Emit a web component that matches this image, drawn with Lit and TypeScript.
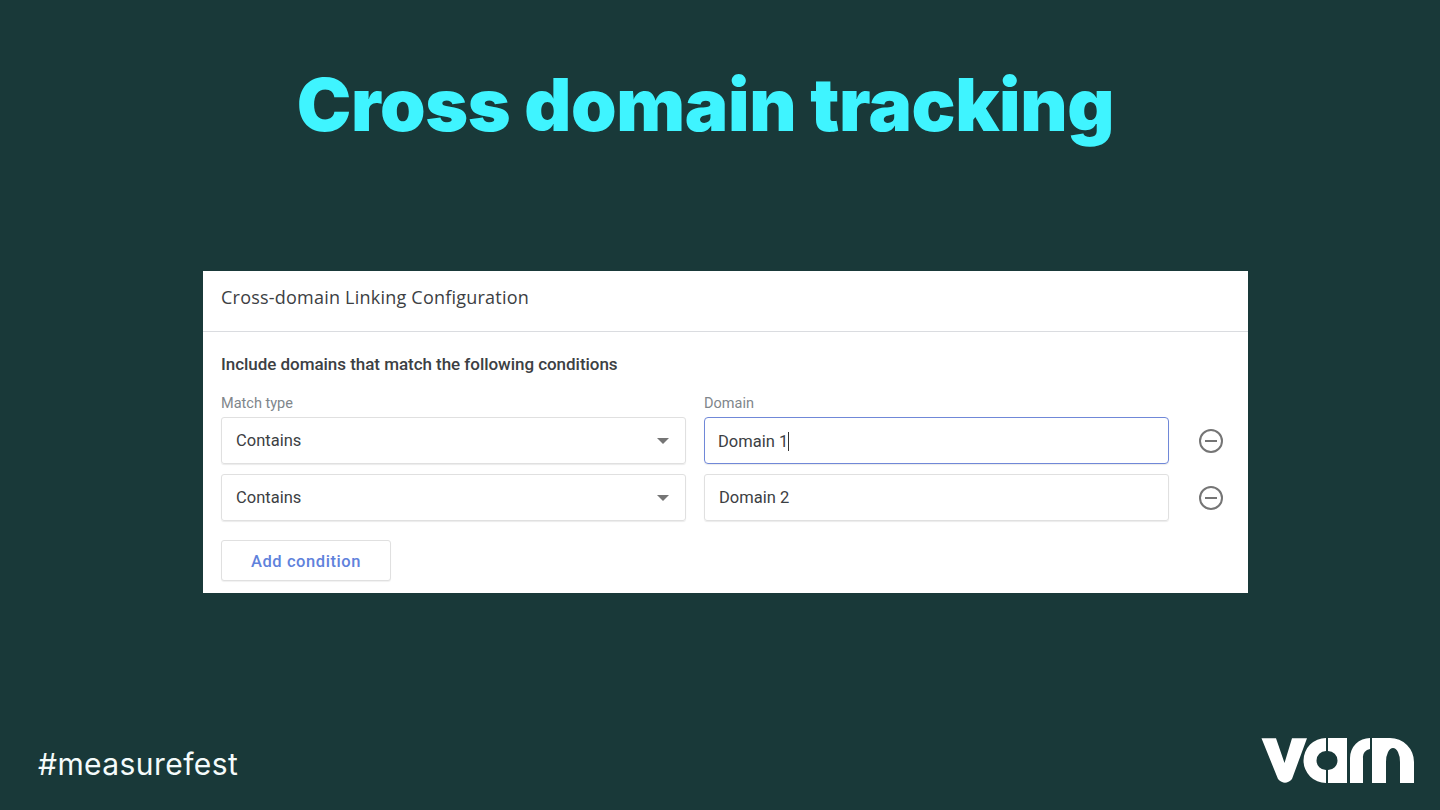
import { LitElement, html, css } from "lit";
import { customElement } from "lit/decorators.js";

const minus = html`<svg class="minus" width="26" height="26" viewBox="0 0 26 26" fill="none" stroke="#757575" stroke-width="2"><circle cx="13" cy="13" r="11"/><path d="M7 13h12"/></svg>`;

@customElement("app-root")
export class AppRoot extends LitElement {
  static styles = css`
    :host { display: block; width: 1440px; height: 810px; overflow: hidden; background: #193939; font-family: "Liberation Sans", sans-serif; }
    .slide { height: 810px; box-sizing: border-box; display: flex; flex-direction: column; }
    h1 { margin: 0; height: 271px; box-sizing: border-box; padding: 60px 29px 0 0; text-align: center; font: 900 73px/90px Inter, sans-serif; letter-spacing: -0.4px; color: #3ff4ff; }
    .panel { margin-left: 203px; width: 1045px; height: 322px; background: #fff; font-family: Roboto, sans-serif; color: #3c4043; }
    .head { height: 61px; box-sizing: border-box; padding: 0 0 9px 18px; border-bottom: 1px solid #dadce0; font: 400 18px/24px "Open Sans", sans-serif; letter-spacing: 0.22px; display: flex; align-items: center; }
    .body { padding: 0 18px; }
    .sub { font-size: 17px; font-weight: 500; line-height: 20px; margin-top: 22px; letter-spacing: -0.04px; }
    .grid { display: grid; grid-template-columns: 465px 465px 1fr; column-gap: 18px; margin-top: 22px; align-items: center; }
    label { font-size: 14.5px; line-height: 16px; color: #80868b; padding-bottom: 5px; }
    .field { height: 47px; box-sizing: border-box; border: 1px solid #e0e0e0; border-radius: 3px; font-size: 16.5px; display: flex; align-items: center; justify-content: space-between; padding: 0 15px 0 14px; box-shadow: 0 1px 1px rgba(0,0,0,.08); }
    .row2 { margin-top: 10px; }
    .icon-cell { display: flex; }
    .focus { border: 1.5px solid #7088d8; padding: 1px 0 0 13px; justify-content: flex-start; border-radius: 4px; }
    .caret { width: 1px; height: 19px; background: #333; margin-left: 0; }
    .arrow { width: 0; height: 0; border: 6px solid transparent; border-top: 6px solid #757575; border-bottom: 0; margin-right: 1px; }
    .minus { justify-self: start; margin-left: 11px; }
    button { display: block; margin-top: 19px; width: 170px; height: 41px; padding: 1px 0 0; background: #fff; border: 1px solid #e0e0e0; border-radius: 3px; color: #5f82dc; font: 500 16.5px Roboto, sans-serif; letter-spacing: 0.58px; box-shadow: 0 1px 1px rgba(0,0,0,.06); }
    footer { flex: 1; display: flex; justify-content: space-between; align-items: flex-start; padding: 145px 25px 0 38px; }
    .tag { color: #f4fbfb; font: 400 30px/40px Inter, sans-serif; letter-spacing: 0.42px; margin-top: 6px; }
    .logo { fill: #fff; }
  `;
  render() {
    return html`<div class="slide">
      <h1>Cross domain tracking</h1>
      <section class="panel">
        <div class="head">Cross-domain Linking Configuration</div>
        <div class="body">
          <div class="sub">Include domains that match the following conditions</div>
          <div class="grid">
            <label>Match type</label><label>Domain</label><span></span>
            <div class="field">Contains<i class="arrow"></i></div>
            <div class="field focus">Domain 1<i class="caret"></i></div>
            ${minus}
            <div class="field row2">Contains<i class="arrow"></i></div>
            <div class="field row2">Domain 2</div>
            <span class="row2 icon-cell">${minus}</span>
          </div>
          <button>Add condition</button>
        </div>
      </section>
      <footer>
        <div class="tag">#measurefest</div>
        <svg class="logo" width="154" height="46" viewBox="0 0 154 46">
          <path d="M0.5 0.3H15L23.5 25L31 0.3H46L31 41Q24 48.5 17 41Z"/>
          <path d="M65 0A22.5 22.5 0 0 0 65 45V32A9.5 9.5 0 0 1 65 13Z"/>
          <path d="M67 0H86V45H67V32A9.5 9.5 0 0 0 67 13Z"/>
          <path d="M89 45V20A20 20 0 0 1 109 0V11A8 8 0 0 0 102 20V45Z"/>
          <path d="M111 45V0H129A24 24 0 0 1 153 24V45H139V24A7 14 0 0 0 125 24V45Z"/>
        </svg>
      </footer>
    </div>`;
  }
}
